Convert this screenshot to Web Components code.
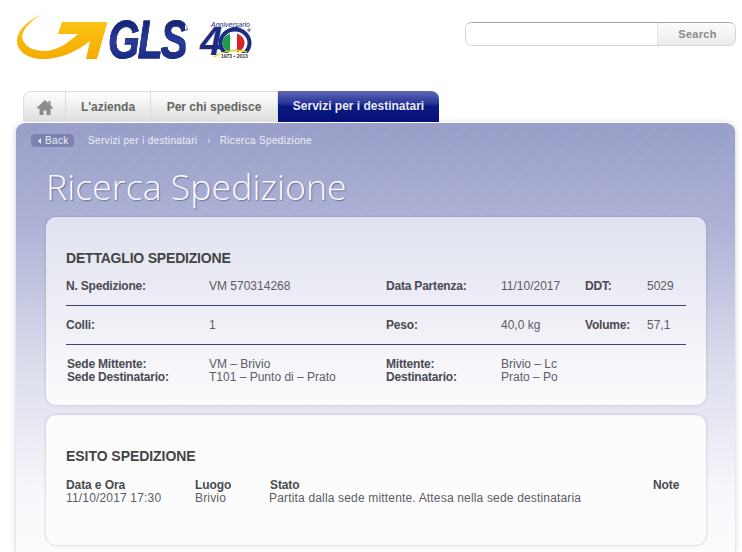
<!DOCTYPE html>
<html lang="it">
<head>
<meta charset="utf-8">
<title>Ricerca Spedizione</title>
<style>
html,body{margin:0;padding:0;background:#fff;}
body{width:742px;height:552px;overflow:hidden;font-family:"Liberation Sans",Arial,sans-serif;font-size:12px;color:#555;}
</style>
</head>
<body>
<gls-header></gls-header>
<gls-tabs></gls-tabs>
<gls-panel heading="Ricerca Spedizione">
  <gls-card heading="DETTAGLIO SPEDIZIONE" style="height:188px">
    <gls-row columns="143px 177px 115px 84px 62px 1fr" line>
      <b>N. Spedizione:</b><span>VM 570314268</span><b>Data Partenza:</b><span>11/10/2017</span><b>DDT:</b><span>5029</span>
    </gls-row>
    <gls-row columns="143px 177px 115px 84px 62px 1fr" line>
      <b>Colli:</b><span>1</span><b>Peso:</b><span>40,0 kg</span><b>Volume:</b><span>57,1</span>
    </gls-row>
    <gls-row columns="143px 177px 115px 1fr" tight>
      <b class="in">Sede Mittente:</b><span>VM – Brivio</span><b>Mittente:</b><span>Brivio – Lc</span>
      <b class="in">Sede Destinatario:</b><span>T101 – Punto di – Prato</span><b>Destinatario:</b><span>Prato – Po</span>
    </gls-row>
  </gls-card>
  <gls-card heading="ESITO SPEDIZIONE" style="height:130px" esito>
    <gls-row columns="129px 74px 384px 1fr" tight wide>
      <b>Data e Ora</b><b>Luogo</b><b class="in">Stato</b><b>Note</b>
      <span>11/10/2017 17:30</span><span>Brivio</span><span>Partita dalla sede mittente. Attesa nella sede destinataria</span><span></span>
    </gls-row>
  </gls-card>
</gls-panel>
<script>
customElements.define('gls-logo', class extends HTMLElement {
  constructor() {
    super()
    let shadow = this.attachShadow({ mode: 'open' })
    shadow.innerHTML = `<style>
    :host{display:flex;align-items:flex-start;width:240px;height:52px;}
    svg{display:block;flex:none;}
    .gls{
      font:italic bold 53px/46px "Liberation Sans",Arial,sans-serif;
      letter-spacing:-2.5px;
      margin:5px -8px 0 0;
      width:100px;
      transform:scaleX(.77);transform-origin:left;
      background:linear-gradient(#10206e,#2a3c9a 55%,#16267a);
      -webkit-background-clip:text;background-clip:text;color:transparent;
      -webkit-text-stroke:.8px #1c2c84;
    }
    .anni{position:relative;width:54px;height:52px;color:#1c2c80;}
    .anni i{position:absolute;left:11px;top:9px;font:italic 7px/7px "Liberation Sans",Arial,sans-serif;white-space:nowrap;}
    .anni b{position:absolute;left:0;top:16px;font:bold italic 40px/26px "Liberation Sans",Arial,sans-serif;letter-spacing:-1px;}
    .anni small{position:absolute;left:20px;top:41px;padding:0 1px;background:#fff;font:bold 5px/6px "Liberation Sans",Arial,sans-serif;white-space:nowrap;color:#333;}
    .anni svg{position:absolute;left:16px;top:13px;overflow:visible;}
    </style>
    <svg width="92" height="52" viewBox="16 12 92 52">
      <defs><linearGradient id="y" x1="0" y1="0" x2="0" y2="1"><stop offset="0" stop-color="#fdc91a"/><stop offset="1" stop-color="#f5ab00"/></linearGradient></defs>
      <path fill="url(#y)" d="M43 14C28 20 17 30 17 41C17 52 29 59 43 59C60 59 76 52 90 41L86 59L97 59L107.500 22L62 22L58 34L78 34C70 41 58 51 45 51C32 51 24 46 22 37C23 28 32 20 43 14Z"/>
    </svg>
    <span class="gls">GLS</span>
    <div class="anni">
      <i>Anniversario</i>
      <b>40</b>
      <svg width="38" height="34" viewBox="0 0 38 34">
        <defs><clipPath id="c"><ellipse cx="17.500" cy="18" rx="11" ry="10"/></clipPath></defs>
        <ellipse cx="19" cy="18" rx="14.500" ry="13.500" fill="#fff" stroke="#1c2c80" stroke-width="4"/>
        <g clip-path="url(#c)">
          <rect x="6" y="7" width="8" height="22" fill="#1f9a46"/>
          <rect x="21" y="7" width="8" height="22" fill="#d8232a"/>
        </g>
        <path d="M-2 32C6 26 20 24 31 27" fill="none" stroke="#e7d21c" stroke-width="1.500"/>
        <circle cx="33" cy="5" r="1.200" fill="none" stroke="#1c2c80" stroke-width=".8"/>
      </svg>
      <small>1973 • 2013</small>
    </div>`
  }
})

customElements.define('gls-search', class extends HTMLElement {
  constructor() {
    super()
    let shadow = this.attachShadow({ mode: 'open' })
    shadow.innerHTML = `<style>
    :host{display:flex;width:271px;height:24px;box-sizing:border-box;border:1px solid #d4d4d4;border-top-color:#a8a8a8;border-radius:7px;overflow:hidden;}
    input{flex:1;min-width:0;border:0;padding:0 6px;margin:0;background:#fff;outline:none;}
    button{width:78px;border:0;border-left:1px solid #e2e2e2;margin:0;padding:0 0 0 2px;
      background:linear-gradient(#fbfbfb,#ececec);color:#8a8a8a;letter-spacing:.3px;
      font:bold 11px "Liberation Sans",Arial,sans-serif;}
    </style><input type="text"><button>Search</button>`
  }
})

customElements.define('gls-header', class extends HTMLElement {
  constructor() {
    super()
    let shadow = this.attachShadow({ mode: 'open' })
    shadow.innerHTML = `<style>
    :host{display:flex;justify-content:space-between;align-items:flex-start;height:91px;box-sizing:border-box;padding:12px 6px 0 16px;}
    gls-search{margin-top:10px;}
    </style><gls-logo></gls-logo><gls-search></gls-search>`
  }
})

customElements.define('gls-tabs', class extends HTMLElement {
  constructor() {
    super()
    let shadow = this.attachShadow({ mode: 'open' })
    shadow.innerHTML = `<style>
    :host{display:flex;height:31px;margin-left:23px;width:416px;font:bold 12px/31px "Liberation Sans",Arial,sans-serif;}
    a{display:block;box-sizing:border-box;text-align:center;color:#666;white-space:nowrap;
      border:1px solid #ddd;border-width:1px 1px 0 0;
      background:linear-gradient(#fff,#ececec 55%,#dedede);}
    a.home{width:43px;border-left-width:1px;border-radius:8px 0 0 0;display:flex;align-items:center;justify-content:center;}
    a.az{width:85px;}
    a.per{width:127px;}
    a.on{width:161px;border:0;border-radius:0 8px 0 0;color:#e9ebf7;line-height:31px;
      background:linear-gradient(#5d68b0,#28349a 40%,#0b1a80 50%,#051078);}
    </style>
    <a class="home"><svg width="16" height="15" viewBox="0 0 16 15"><path fill="#8c8c8c" d="M8 0L0 7.500V8.500H2.500V15H6.500V10.500H9.500V15H13.500V8.500H16V7.500L13.500 5.200V1H11.500V3.300Z"/></svg></a>
    <a class="az">L'azienda</a><a class="per">Per chi spedisce</a><a class="on">Servizi per i destinatari</a>`
  }
})

customElements.define('gls-panel', class extends HTMLElement {
  constructor() {
    super()
    let shadow = this.attachShadow({ mode: 'open' })
    shadow.innerHTML = `<style>
    :host{display:block;box-sizing:border-box;margin-left:15px;width:721px;height:430px;padding:11px 30px 0 30px;
      border-radius:10px 10px 0 0;border:1px solid #e6e7f2;border-bottom:0;border-top-color:#fff;
      box-shadow:0 0 4px rgba(120,120,150,.25);
      background:
        repeating-linear-gradient(135deg,rgba(255,255,255,.05) 0 1px,rgba(255,255,255,0) 1px 3px),
        linear-gradient(#979dc7,#adb1d5 24%,#d9dbeb 55%,#f8f8fc 88%,#fcfcfe);}
    nav{display:flex;align-items:center;height:13px;color:#eceef8;font-size:10px;letter-spacing:.33px;margin-left:-15px;}
    .back{display:flex;align-items:center;gap:4px;box-sizing:border-box;width:43px;height:13px;padding-left:7px;border-radius:4px;background:#7d83ae;margin-right:14px;}
    .back::before{content:"";border:3px solid transparent;border-right-color:#eceef8;border-left:0;}
    .sep{margin:0 9px 0 10px;font-size:9px;}
    h1{margin:17px 0 0 0;height:53px;font:300 35.700px/44px "Open Sans",sans-serif;color:#fbfbff;
      text-shadow:1px 1px 1px rgba(60,70,130,.55);}
    .cards{display:flex;flex-direction:column;gap:10px;}
    </style>
    <nav><span class="back">Back</span><span>Servizi per i destinatari</span><span class="sep">›</span><span>Ricerca Spedizione</span></nav>
    <h1></h1>
    <div class="cards"><slot></slot></div>`
    shadow.querySelector('h1').textContent = this.getAttribute('heading')
  }
})

customElements.define('gls-card', class extends HTMLElement {
  constructor() {
    super()
    let shadow = this.attachShadow({ mode: 'open' })
    shadow.innerHTML = `<style>
    :host{display:block;box-sizing:border-box;width:660px;padding:33px 20px 0;border-radius:10px;
      background:linear-gradient(#e0e2ef,#fbfbfd);
      box-shadow:0 0 3px rgba(110,110,140,.4);}
    :host([esito]){background:#fcfcfd;}
    h2{margin:0 0 1px;font:bold 14px/16px "Liberation Sans",Arial,sans-serif;letter-spacing:-.2px;color:#444;}
    :host([esito]) h2{margin-bottom:3px;letter-spacing:-.05px;}
    </style><h2></h2><slot></slot>`
    shadow.querySelector('h2').textContent = this.getAttribute('heading')
  }
})

customElements.define('gls-row', class extends HTMLElement {
  constructor() {
    super()
    let shadow = this.attachShadow({ mode: 'open' })
    shadow.innerHTML = `<style>
    :host{display:grid;box-sizing:border-box;height:39px;align-content:center;line-height:13px;font-size:12px;}
    :host([line]){border-bottom:1px solid #3c4478;}
    :host([tight]){height:auto;padding-top:13px;align-content:start;}
    :host([wide]){padding-top:12px;}
    ::slotted(b){color:#4a4a52;letter-spacing:-.2px;}
    ::slotted(.in){padding-left:1px;}
    ::slotted(span){color:#5c5c64;}
    :host([wide]) ::slotted(span){letter-spacing:.17px;}
    :host([wide]) ::slotted(b){letter-spacing:-.1px;}
    </style><slot></slot>`
    this.style.gridTemplateColumns = this.getAttribute('columns')
  }
})
</script>
</body>
</html>
